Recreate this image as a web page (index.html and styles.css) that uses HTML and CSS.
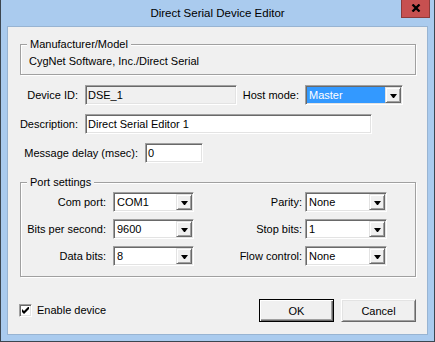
FILE: index.html
```html
<!DOCTYPE html>
<html lang="en">
<head>
  <meta charset="UTF-8">
  <title>Direct Serial Device Editor</title>
  <link rel="stylesheet" href="styles.css">
</head>
<body>
  <div class="window">
    <div class="titlebar">
      <span></span>
      <span class="title">Direct Serial Device Editor</span>
      <button class="close-btn" aria-label="Close">
        <svg width="10" height="8" viewBox="0 0 10 8"><path d="M1.5 0.5 L8.5 7.5 M8.5 0.5 L1.5 7.5" stroke="#000" stroke-width="2.3" fill="none"/></svg>
      </button>
    </div>

    <div class="client">
      <div class="group group-model">
        <span class="legend">Manufacturer/Model</span>
        <div class="model-name">CygNet Software, Inc./Direct Serial</div>
      </div>

      <div class="row row-id">
        <span class="lbl lbl-id">Device ID:</span>
        <div class="field field-id disabled">DSE_1</div>
        <span class="lbl lbl-host">Host mode:</span>
        <div class="combo combo-host">
          <span class="combo-text selected">Master</span>
          <span class="combo-arrow"></span>
        </div>
      </div>

      <div class="row row-desc">
        <span class="lbl lbl-id">Description:</span>
        <div class="field field-desc">Direct Serial Editor 1</div>
      </div>

      <div class="row row-delay">
        <span class="lbl lbl-delay">Message delay (msec):</span>
        <div class="field field-delay">0</div>
      </div>

      <div class="group group-port">
        <span class="legend">Port settings</span>
        <div class="port-grid">
          <span class="lbl lbl-left">Com port:</span>
          <div class="combo combo-left"><span class="combo-text">COM1</span><span class="combo-arrow"></span></div>
          <span class="lbl lbl-right">Parity:</span>
          <div class="combo combo-right"><span class="combo-text">None</span><span class="combo-arrow"></span></div>

          <span class="lbl lbl-left">Bits per second:</span>
          <div class="combo combo-left"><span class="combo-text">9600</span><span class="combo-arrow"></span></div>
          <span class="lbl lbl-right">Stop bits:</span>
          <div class="combo combo-right"><span class="combo-text">1</span><span class="combo-arrow"></span></div>

          <span class="lbl lbl-left">Data bits:</span>
          <div class="combo combo-left"><span class="combo-text">8</span><span class="combo-arrow"></span></div>
          <span class="lbl lbl-right">Flow control:</span>
          <div class="combo combo-right"><span class="combo-text">None</span><span class="combo-arrow"></span></div>
        </div>
      </div>

      <div class="footer">
        <span class="checkbox">
          <svg width="7" height="7" viewBox="0 0 7 7"><path d="M0 2 L2 4 L7 -1 L7 2 L2 7 L0 5 Z" fill="#000"/></svg>
        </span>
        <span class="check-label">Enable device</span>
        <button class="btn btn-default">OK</button>
        <button class="btn btn-cancel">Cancel</button>
      </div>
    </div>
  </div>
</body>
</html>
```

FILE: styles.css
```css
* {
  box-sizing: border-box;
}

body {
  margin: 0;
  font-family: "Liberation Sans", Arial, sans-serif;
  font-size: 11px;
  color: #000;
}

.window {
  width: 435px;
  height: 342px;
  background: #aacbee;
  border: 1px solid #3c4650;
  border-top: none;
  padding: 0 6px 6px;
  display: flex;
  flex-direction: column;
}

/* title bar */
.titlebar {
  height: 26px;
  margin: 0 -6px;
  display: grid;
  grid-template-columns: 1fr auto 1fr;
  align-items: start;
}

.title {
  font-size: 11.5px;
  line-height: 25px;
  padding-top: 1px;
  color: #000;
}

.close-btn {
  justify-self: end;
  margin-right: 4px;
  width: 29px;
  height: 18px;
  padding: 0;
  background: #c75050;
  border: 1px solid #8c3a3a;
  border-top: none;
  display: flex;
  align-items: center;
  justify-content: center;
}

.close-btn svg {
  margin-top: -1px;
}

/* dialog client area */
.client {
  flex: 1;
  background: #f0f0f0;
  border: 1px solid #98b4d2;
  display: flex;
  flex-direction: column;
}

.group {
  border: 1px solid #a0a0a0;
  box-shadow: inset 1px 1px 0 #fff, 1px 1px 0 #fff;
  margin: 0 11px 0 12px;
}

.legend {
  display: block;
  width: fit-content;
  margin: -7px 0 0 6px;
  padding: 0 3px;
  background: #f0f0f0;
  line-height: 13px;
}

.group-model {
  margin-top: 17px;
  padding-bottom: 6px;
}

.model-name {
  margin-top: 4px;
  padding-left: 8px;
  line-height: 13px;
}

.row {
  display: flex;
  align-items: center;
  height: 20px;
}

.row-id {
  margin-top: 10px;
}

.row-desc,
.row-delay {
  margin-top: 9px;
}

.lbl {
  text-align: right;
  white-space: nowrap;
  line-height: 13px;
}

.lbl-id {
  width: 77px;
  padding-right: 7px;
}

.lbl-host {
  width: 68px;
  padding-right: 6px;
}

.lbl-delay {
  width: 137px;
  padding-right: 7px;
}

/* sunken edit fields */
.field {
  height: 20px;
  border: 1px solid;
  border-color: #a0a0a0 #fff #fff #a0a0a0;
  box-shadow: inset 1px 1px 0 #696969, inset -1px -1px 0 #e3e3e3;
  background: #fff;
  padding: 1px 2px;
  line-height: 16px;
  white-space: nowrap;
}

.field.disabled {
  background: #f0f0f0;
}

.field-id {
  width: 152px;
}

.field-desc {
  width: 287px;
}

.field-delay {
  width: 58px;
}

/* combo boxes */
.combo {
  display: flex;
  height: 20px;
  border: 1px solid;
  border-color: #a0a0a0 #fff #fff #a0a0a0;
  box-shadow: inset 1px 1px 0 #696969, inset -1px -1px 0 #e3e3e3;
  background: #fff;
  padding: 1px;
}

.combo-text {
  flex: 1;
  line-height: 16px;
  padding-left: 2px;
  white-space: nowrap;
}

.combo-text.selected {
  background: #3399ff;
  color: #fff;
}

.combo-arrow {
  width: 16px;
  height: 16px;
  background: #f0f0f0;
  border: 1px solid;
  border-color: #e3e3e3 #696969 #696969 #e3e3e3;
  box-shadow: inset 1px 1px 0 #fff, inset -1px -1px 0 #a0a0a0;
  display: flex;
  align-items: center;
  justify-content: center;
}

.combo-arrow::before {
  content: "";
  width: 1px;
  height: 0;
  border-top: 4px solid #000;
  border-left: 3px solid transparent;
  border-right: 3px solid transparent;
  margin: 1px 0 0 1px;
}

.combo-host {
  width: 98px;
}

/* port settings */
.group-port {
  margin-top: 19px;
  padding-bottom: 10px;
}

.port-grid {
  margin-top: 3px;
  display: grid;
  grid-template-columns: 92px 81px 111px 82px;
  grid-auto-rows: 20px;
  row-gap: 7px;
  align-items: center;
}

.lbl-left {
  padding-right: 7px;
}

.lbl-right {
  padding-right: 3px;
}

/* footer */
.footer {
  margin-top: 22px;
  height: 23px;
  display: flex;
  align-items: center;
  padding: 0 11px;
}

.checkbox {
  width: 13px;
  height: 13px;
  border: 1px solid;
  border-color: #a0a0a0 #fff #fff #a0a0a0;
  box-shadow: inset 1px 1px 0 #696969, inset -1px -1px 0 #e3e3e3;
  background: #fff;
  display: flex;
  align-items: center;
  justify-content: center;
}

.check-label {
  margin-left: 5px;
  line-height: 13px;
}

.btn {
  width: 75px;
  height: 23px;
  padding: 0;
  font: inherit;
  color: #000;
  background: #f0f0f0;
  border: 1px solid;
  border-color: #fff #696969 #696969 #fff;
  box-shadow: inset 1px 1px 0 #e3e3e3, inset -1px -1px 0 #a0a0a0;
}

.btn-default {
  margin-left: auto;
  border-color: #000;
  box-shadow: inset 1px 1px 0 #fff, inset -1px -1px 0 #696969, inset -2px -2px 0 #a0a0a0;
}

.btn-cancel {
  margin-left: 7px;
}
```
